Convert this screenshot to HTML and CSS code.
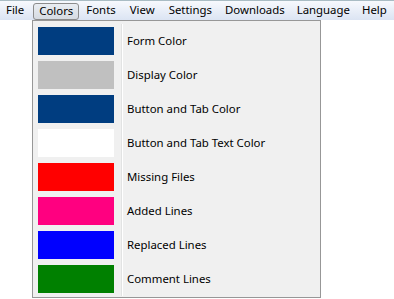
FILE: index.html
```html
<!DOCTYPE html>
<html lang="en">
<head>
  <meta charset="UTF-8">
  <title>Colors menu</title>
  <link rel="stylesheet" href="styles.css">
</head>
<body>

<div class="menubar">
  <span class="menu-item">File</span>
  <span class="menu-item open">Colors</span>
  <span class="menu-item">Fonts</span>
  <span class="menu-item">View</span>
  <span class="menu-item">Settings</span>
  <span class="menu-item tight">Downloads</span>
  <span class="menu-item tight">Language</span>
  <span class="menu-item tight">Help</span>
</div>

<div class="dropdown">
  <div class="row"><span class="swatch navy"></span><span class="label">Form Color</span></div>
  <div class="row"><span class="swatch silver"></span><span class="label">Display Color</span></div>
  <div class="row"><span class="swatch navy"></span><span class="label">Button and Tab Color</span></div>
  <div class="row"><span class="swatch white"></span><span class="label">Button and Tab Text Color</span></div>
  <div class="row"><span class="swatch red"></span><span class="label">Missing Files</span></div>
  <div class="row"><span class="swatch pink"></span><span class="label">Added Lines</span></div>
  <div class="row"><span class="swatch blue"></span><span class="label">Replaced Lines</span></div>
  <div class="row"><span class="swatch green"></span><span class="label">Comment Lines</span></div>
</div>

</body>
</html>
```

FILE: styles.css
```css
body {
  margin: 0;
  background: #fff;
  font-family: "Noto Sans", "DejaVu Sans", sans-serif;
  font-size: 11.4px;
  color: #000;
  position: relative;
  width: 394px;
  height: 299px;
  overflow: hidden;
}
.menubar {
  display: flex;
  height: 19px;
  border-top: 1px solid #a9bcc4;
  background: linear-gradient(#f7f9fd, #dbe4f3);
}
.menu-item {
  padding: 0 7px;
  line-height: 18px;
  height: 18px;
  white-space: nowrap;
}
.menu-item:first-child {
  padding-left: 6px;
  padding-right: 9px;
}
.menu-item.tight {
  padding: 0 6px;
}
.menu-item.open {
  margin-top: 2px;
  height: 15px;
  line-height: 14px;
  padding: 0 5px;
  border: 1px solid #8c8c8c;
  border-radius: 3px;
  background: linear-gradient(#e9edf2, #d6dbe2);
}
.dropdown {
  position: absolute;
  left: 32px;
  top: 20px;
  width: 287px;
  padding: 3px 0 1px;
  border: 1px solid #979797;
  background: #f0f0f0;
}
.row {
  display: flex;
  align-items: center;
  height: 34px;
}
.swatch {
  width: 76px;
  height: 28px;
  margin-left: 5px;
}
.label {
  margin-left: 7px;
  padding-left: 5px;
  height: 34px;
  line-height: 34px;
  border-left: 1px solid #e2e3e3;
  box-shadow: inset 1px 0 0 #fff;
}
.navy { background: #003d80; }
.silver { background: #c0c0c0; }
.white { background: #fff; }
.red { background: #ff0000; }
.pink { background: #ff0080; }
.blue { background: #0000ff; }
.green { background: #008000; }
```
